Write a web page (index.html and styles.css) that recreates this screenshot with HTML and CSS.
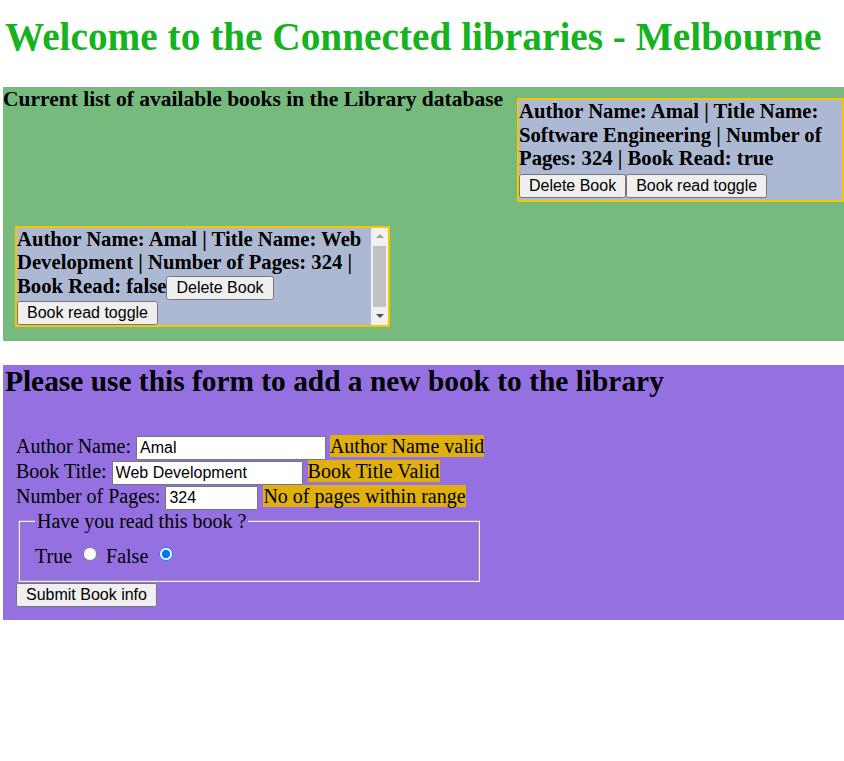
FILE: index.html
```html
<!DOCTYPE html>
<html lang="en">
<head>
<meta charset="utf-8">
<title>Connected libraries - Melbourne</title>
<link rel="stylesheet" href="styles.css">
</head>
<body>
<h1 class="site-title">Welcome to the Connected libraries - Melbourne</h1>

<section class="library">
  <h3 class="list-title">Current list of available books in the Library database</h3>

  <div class="card card-wide">
    <div class="line">Author Name: Amal | Title Name:</div>
    <div class="line">Software Engineering | Number of</div>
    <div class="line">Pages: 324 | Book Read: true</div>
    <div class="line actions"><button type="button" class="btn">Delete Book</button><button type="button" class="btn">Book read toggle</button></div>
  </div>

  <div class="card card-scroll">
    <div class="card-body">
      <div class="line">Author Name: Amal | Title Name: Web</div>
      <div class="line">Development | Number of Pages: 324 |</div>
      <div class="line">Book Read: false<button type="button" class="btn">Delete Book</button></div>
      <div class="line"><button type="button" class="btn">Book read toggle</button></div>
    </div>
    <div class="scrollbar" aria-hidden="true">
      <div class="sb-btn"><span class="arrow-up"></span></div>
      <div class="sb-thumb"></div>
      <div class="sb-btn"><span class="arrow-down"></span></div>
    </div>
  </div>
</section>

<section class="add-book">
  <h2 class="form-title">Please use this form to add a new book to the library</h2>
  <form class="book-form">
    <div class="row">Author Name: <input type="text" class="field field-author" value="Amal"> <span class="valid">Author Name valid</span></div>
    <div class="row">Book Title: <input type="text" class="field field-title" value="Web Development"> <span class="valid">Book Title Valid</span></div>
    <div class="row">Number of Pages: <input type="text" class="field field-pages" value="324"> <span class="valid">No of pages within range</span></div>
    <fieldset class="read-set">
      <legend>Have you read this book ?</legend>
      True <input type="radio" class="radio" name="read" value="true"> False <input type="radio" class="radio" name="read" value="false" checked>
    </fieldset>
    <div class="row"><button type="button" class="btn">Submit Book info</button></div>
  </form>
</section>
</body>
</html>
```

FILE: styles.css
```css
html, body {
  background: #ffffff;
}

body {
  margin: 0 0 0 3px;
  font-family: "Liberation Serif", "Times New Roman", serif;
  color: #000;
}

.site-title {
  margin: 14px 0 27px 2px;
  font-size: 39.3px;
  font-weight: bold;
  color: #17b21f;
  white-space: nowrap;
}

.library {
  display: flex;
  flex-wrap: wrap;
  align-items: flex-start;
  background: #76ba7e;
  padding-bottom: 2px;
  margin-bottom: 24px;
}

.list-title {
  flex: 0 0 502px;
  margin: 0;
  font-size: 21.5px;
  font-weight: bold;
  white-space: nowrap;
}

.card {
  box-sizing: border-box;
  background: #adb9d3;
  border: 2px solid #f7c600;
  font-size: 20.7px;
  font-weight: bold;
  line-height: 23.5px;
}

.card .line {
  white-space: nowrap;
}

.card-wide {
  width: 327px;
  margin: 11px 0 12px 12px;
}

.card-wide .actions {
  padding: 2px 0 2px;
}

.card-scroll {
  display: flex;
  width: 375px;
  height: 101px;
  margin: 12px;
  overflow: hidden;
}

.card-body {
  flex: 1 1 auto;
  min-width: 0;
  overflow: hidden;
}

.scrollbar {
  flex: 0 0 17px;
  display: flex;
  flex-direction: column;
  background: #f1f1f1;
}

.sb-btn {
  flex: 0 0 17px;
  display: flex;
  align-items: center;
  justify-content: center;
}

.arrow-up {
  width: 0;
  height: 0;
  border-left: 4px solid transparent;
  border-right: 4px solid transparent;
  border-bottom: 4px solid #a3a3a3;
}

.arrow-down {
  width: 0;
  height: 0;
  border-left: 4px solid transparent;
  border-right: 4px solid transparent;
  border-top: 4px solid #505050;
}

.sb-thumb {
  flex: 1 1 auto;
  margin: 1px 2px;
  background: #c1c1c1;
}

.btn {
  font-family: "Liberation Sans", Arial, sans-serif;
  font-size: 16px;
  padding: 1px 8px;
  font-weight: normal;
}

.add-book {
  background: #9570e0;
  padding-bottom: 13px;
}

.form-title {
  margin: 0 0 0 2px;
  font-size: 29.4px;
  font-weight: bold;
  white-space: nowrap;
}

.book-form {
  width: 466px;
  margin: 0 0 0 13px;
  padding-top: 37px;
  font-size: 20px;
}

.row {
  white-space: nowrap;
}

.field {
  box-sizing: border-box;
  height: 24px;
  font-family: "Liberation Sans", Arial, sans-serif;
  font-size: 16px;
  padding: 1px 2px;
}

.field-author {
  width: 190px;
}

.field-title {
  width: 191px;
}

.field-pages {
  width: 93px;
}

.valid {
  background: #dfb00e;
}

.read-set {
  margin: 0 2px;
  padding-top: 11px;
}

.radio {
  width: 14px;
  height: 14px;
  margin: 3px 4px 0 6px;
  vertical-align: 2px;
}
```
